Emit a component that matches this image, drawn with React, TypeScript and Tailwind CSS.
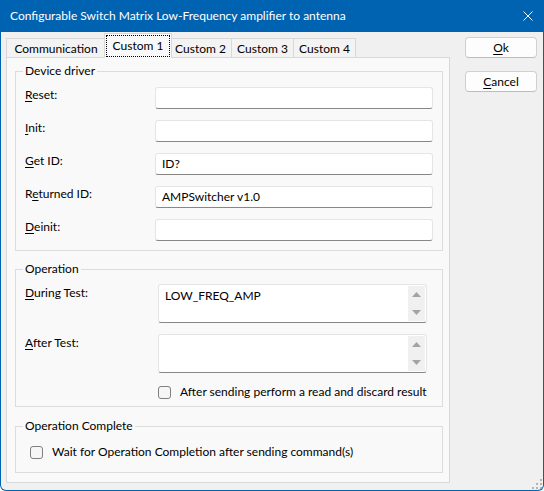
import React from 'react';

const FONT = "font-['Segoe_UI','Lato',sans-serif]";

function Key({ children }: { children: React.ReactNode }) {
  return <span className="underline underline-offset-[2px]">{children}</span>;
}

function TextBox({ value }: { value?: string }) {
  return (
    <div className="h-[22px] w-[278px] bg-white border border-[#e5e5e5] border-b-[#878787] rounded-[3px] pl-[6px] flex items-center leading-[16px]">
      {value}
    </div>
  );
}

function MemoBox({ value }: { value?: string }) {
  return (
    <div className="h-[39px] w-[269px] bg-white border border-[#e5e5e5] border-b-[#878787] rounded-[3px] flex">
      <div className="flex-1 pl-[6px] pt-[3px] leading-[16px]">{value}</div>
      <div className="w-[17px] my-[1px] mr-[1px] bg-[#f0f0f0] flex flex-col items-center justify-between py-[6px]">
        <svg width="9" height="5" viewBox="0 0 9 5">
          <path d="M4.5 0 L9 5 L0 5 Z" fill="#a3a3a3" />
        </svg>
        <svg width="9" height="5" viewBox="0 0 9 5">
          <path d="M0 0 L9 0 L4.5 5 Z" fill="#a3a3a3" />
        </svg>
      </div>
    </div>
  );
}

function CheckBox() {
  return <div className="w-[13px] h-[13px] rounded-[3px] border border-[#7f7f7f] bg-[#f6f6f6] shrink-0" />;
}

function Legend({ children, className }: { children: React.ReactNode; className: string }) {
  return <legend className={`${className} px-[2px] leading-[16px]`}>{children}</legend>;
}

const driverRows: { label: React.ReactNode; value?: string }[] = [
  { label: <><Key>R</Key>eset:</> },
  { label: <><Key>I</Key>nit:</> },
  { label: <><Key>G</Key>et ID:</>, value: 'ID?' },
  { label: <>R<Key>e</Key>turned ID:</>, value: 'AMPSwitcher v1.0' },
  { label: <><Key>D</Key>einit:</> },
];

const tabs = ['Communication', 'Custom 1', 'Custom 2', 'Custom 3', 'Custom 4'];

export default function App() {
  return (
    <div className={`${FONT} text-[12px] text-black w-[544px] h-[491px] bg-[#f0f0f0] border-x border-b border-[#0063b1] rounded-b-[6px] flex flex-col relative overflow-hidden`}>
      {/* title bar */}
      <div className="h-[32px] bg-[#0063b1] text-white flex items-center pl-[9px] shrink-0">
        <span className="flex-1 leading-[16px]">Configurable Switch Matrix Low-Frequency amplifier to antenna</span>
        <svg width="10" height="10" viewBox="0 0 10 10" className="mr-[10px]">
          <path d="M0.5 0.5 L9.5 9.5 M9.5 0.5 L0.5 9.5" stroke="white" strokeWidth="1" />
        </svg>
      </div>

      <div className="flex pt-[4px]">
        {/* tabs + page */}
        <div className="ml-[5px] w-[444px] flex flex-col">
          <div className="flex items-end h-[21px]">
            {tabs.map((t, i) => {
              const w = i === 0 ? 'w-[100px]' : i === 1 ? 'w-[64px]' : 'w-[62px]';
              if (i === 1) {
                return (
                  <div key={t} className={`${w} shrink-0 -mx-[2px] box-content px-[1px] h-[22px] -mb-px relative z-10 bg-[#f9f9f9] border-x border-t border-[#d9d9d9] p-[1px]`}>
                    <div className="h-full border border-dotted border-black flex items-center justify-center leading-[16px] pb-[1px]">
                      {t}
                    </div>
                  </div>
                );
              }
              return (
                <div key={t} className={`${w} shrink-0 h-[19px] bg-[#f3f3f3] border-t border-r border-[#d9d9d9] ${i === 0 ? 'border-l' : ''} flex items-center justify-center leading-[16px] pt-[2px]`}>
                  {t}
                </div>
              );
            })}
          </div>

          <div className="h-[426px] bg-[#f9f9f9] border border-[#d9d9d9] pl-[8px] pr-[6px] pt-[5px]">
            {/* Device driver */}
            <fieldset className="border border-[#dcdcdc] pl-[9px] pr-[9px] pt-[8px] pb-[9px] flex flex-col gap-[11px]">
              <Legend className="-ml-[2px]">Device driver</Legend>
              {driverRows.map((r, i) => (
                <div key={i} className="flex items-start">
                  <div className="w-[130px] leading-[16px]">{r.label}</div>
                  <TextBox value={r.value} />
                </div>
              ))}
            </fieldset>

            {/* Operation */}
            <fieldset className="mt-[10px] border border-[#dcdcdc] pl-[9px] pr-[15px] pt-[7px] pb-[6px] flex flex-col gap-[11px]">
              <Legend className="-ml-[2px]">Operation</Legend>
              <div className="flex items-start">
                <div className="w-[133px] leading-[16px] pt-[1px]"><Key>D</Key>uring Test:</div>
                <MemoBox value="LOW_FREQ_AMP" />
              </div>
              <div className="flex items-start">
                <div className="w-[133px] leading-[16px] pt-[1px]"><Key>A</Key>fter Test:</div>
                <MemoBox />
              </div>
              <div className="flex items-center h-[16px] pl-[133px] gap-[9px]">
                <CheckBox />
                <span className="leading-[16px] whitespace-nowrap">After sending perform a read and discard result</span>
              </div>
            </fieldset>

            {/* Operation Complete */}
            <fieldset className="mt-[11px] border border-[#dcdcdc] pl-[14px] pt-[10px] pb-[12px]">
              <Legend className="-ml-[7px]">Operation Complete</Legend>
              <div className="flex items-center h-[16px] gap-[9px]">
                <CheckBox />
                <span className="leading-[16px] whitespace-nowrap">Wait for Operation Completion after sending command(s)</span>
              </div>
            </fieldset>
          </div>
        </div>

        {/* buttons */}
        <div className="ml-[15px] w-[72px] pt-[1px] flex flex-col gap-[13px]">
          <button className="h-[21px] w-full bg-[#fdfdfd] border border-[#d0d0d0] border-b-[#bdbdbd] rounded-[4px] leading-[16px]">
            <Key>O</Key>k
          </button>
          <button className="h-[21px] w-full bg-[#fdfdfd] border border-[#d0d0d0] border-b-[#bdbdbd] rounded-[4px] leading-[16px]">
            <Key>C</Key>ancel
          </button>
        </div>
      </div>

      {/* size grip */}
      <svg width="10" height="10" viewBox="0 0 10 10" className="absolute right-[1px] bottom-[1px]">
        <rect x="8" y="0" width="2" height="2" fill="#b4b4b4" />
        <rect x="4" y="4" width="2" height="2" fill="#b4b4b4" />
        <rect x="8" y="4" width="2" height="2" fill="#b4b4b4" />
        <rect x="0" y="8" width="2" height="2" fill="#b4b4b4" />
        <rect x="4" y="8" width="2" height="2" fill="#b4b4b4" />
        <rect x="8" y="8" width="2" height="2" fill="#b4b4b4" />
      </svg>
    </div>
  );
}
